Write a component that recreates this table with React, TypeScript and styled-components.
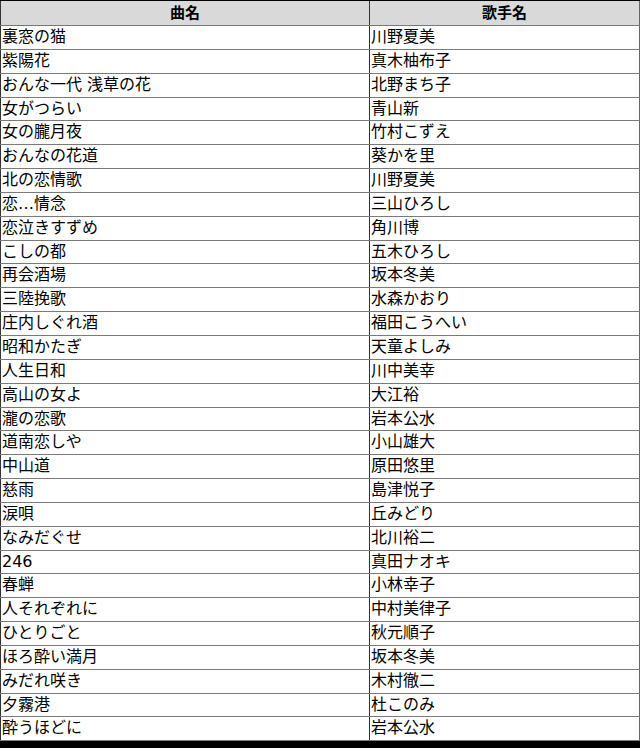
import * as React from 'react';
import styled, { createGlobalStyle } from 'styled-components';

const GlobalStyle = createGlobalStyle`
  html, body {
    margin: 0;
    padding: 0;
    background: #000;
  }
  body {
    font-family: "DejaVu Sans", "Noto Sans CJK JP", sans-serif;
  }
`;

const Page = styled.div`
  padding-top: 1px;
  width: 640px;
`;

const Table = styled.table`
  width: 640px;
  border-collapse: collapse;
  background: #fff;
  table-layout: fixed;
  border-left: 1px solid #333;
  border-right: 1px solid #666;
`;

const HeadCell = styled.th`
  background: #d9d9d9;
  font-size: 15px;
  font-weight: bold;
  text-align: center;
  color: #000;
  height: 24px;
  padding: 0 2px;
  border-bottom: 1px solid #777;
  border-left: 1px solid #333;
  line-height: 24px;
`;

const Cell = styled.td`
  font-size: 16px;
  color: #000;
  padding: 0 1px;
  height: 22.85px;
  line-height: 22.85px;
  border-bottom: 1px solid #7a7a7a;
  border-left: 1px solid #333;
  white-space: nowrap;
  overflow: hidden;
`;

const songs: [string, string][] = [
  ['裏窓の猫', '川野夏美'],
  ['紫陽花', '真木柚布子'],
  ['おんな一代 浅草の花', '北野まち子'],
  ['女がつらい', '青山新'],
  ['女の朧月夜', '竹村こずえ'],
  ['おんなの花道', '葵かを里'],
  ['北の恋情歌', '川野夏美'],
  ['恋…情念', '三山ひろし'],
  ['恋泣きすずめ', '角川博'],
  ['こしの都', '五木ひろし'],
  ['再会酒場', '坂本冬美'],
  ['三陸挽歌', '水森かおり'],
  ['庄内しぐれ酒', '福田こうへい'],
  ['昭和かたぎ', '天童よしみ'],
  ['人生日和', '川中美幸'],
  ['高山の女よ', '大江裕'],
  ['瀧の恋歌', '岩本公水'],
  ['道南恋しや', '小山雄大'],
  ['中山道', '原田悠里'],
  ['慈雨', '島津悦子'],
  ['涙唄', '丘みどり'],
  ['なみだぐせ', '北川裕二'],
  ['246', '真田ナオキ'],
  ['春蝉', '小林幸子'],
  ['人それぞれに', '中村美律子'],
  ['ひとりごと', '秋元順子'],
  ['ほろ酔い満月', '坂本冬美'],
  ['みだれ咲き', '木村徹二'],
  ['夕霧港', '杜このみ'],
  ['酔うほどに', '岩本公水'],
];

export default function App() {
  return (
    <Page>
      <GlobalStyle />
      <Table>
        <colgroup>
          <col style={{ width: 369 }} />
          <col />
        </colgroup>
        <thead>
          <tr>
            <HeadCell>曲名</HeadCell>
            <HeadCell>歌手名</HeadCell>
          </tr>
        </thead>
        <tbody>
          {songs.map(([title, artist]) => (
            <tr key={title}>
              <Cell>{title}</Cell>
              <Cell>{artist}</Cell>
            </tr>
          ))}
        </tbody>
      </Table>
    </Page>
  );
}
